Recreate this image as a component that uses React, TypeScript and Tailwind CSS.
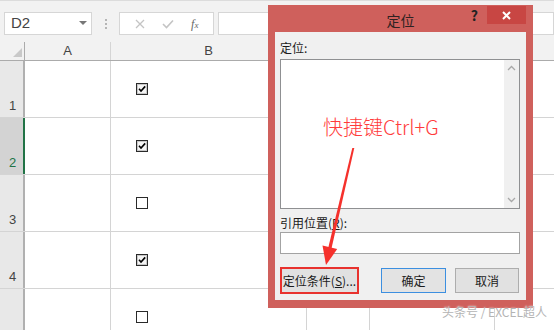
import { ReactNode } from "react";

const rows = [
    { n: "1", checked: true },
    { n: "2", checked: true, active: true },
    { n: "3", checked: false },
    { n: "4", checked: true },
    { n: "", checked: false },
];

function CheckBox({ checked }: { checked: boolean }) {
    return (
        <svg width="12" height="12" viewBox="0 0 12 12" className="block">
            <rect x="0.5" y="0.5" width="11" height="11" fill={checked ? "#f4f4f4" : "#fff"} stroke="#2a2a2a" />
            {checked && <rect x="1.5" y="1.5" width="9" height="9" fill="none" stroke="#c8c8c8" />}
            {checked && <path d="M3 5.8 L5 8 L9.2 3.4" fill="none" stroke="#000" strokeWidth="1.6" />}
        </svg>
    );
}

function Button({ children, className }: { children: ReactNode; className: string }) {
    return (
        <div className={`h-[25px] flex items-center justify-center text-[12px] text-[#1b1b1b] ${className}`}>
            {children}
        </div>
    );
}

export default function App() {
    const font = "font-['Liberation_Sans','Noto_Sans_CJK_SC',sans-serif]";
    const cjk = "font-['Noto_Sans_CJK_SC','Liberation_Sans',sans-serif]";

    return (
        <div className={`relative w-[554px] h-[330px] overflow-hidden bg-white ${font}`}>
            {/* toolbar */}
            <div className="h-[42px] bg-[#f2f2f2] border-t border-[#dcdcdc] flex items-start pt-[11px]">
                <div className="ml-[4px] w-[88px] h-[23px] bg-white border border-[#d6d6d6] flex items-center justify-between pl-[6px] pr-[4px]">
                    <span className="text-[15px] text-[#444]">D2</span>
                    <svg width="8" height="5" viewBox="0 0 8 5"><path d="M0 0 H8 L4 4 Z" fill="#777" /></svg>
                </div>
                <div className="w-[27px] h-[23px] flex flex-col items-center justify-center gap-[2px]">
                    <span className="w-[2px] h-[2px] bg-[#b5b5b5]" />
                    <span className="w-[2px] h-[2px] bg-[#b5b5b5]" />
                    <span className="w-[2px] h-[2px] bg-[#b5b5b5]" />
                </div>
                <div className="w-[95px] h-[23px] bg-white border border-[#d6d6d6] flex items-center justify-around px-[6px]">
                    <svg width="10" height="10" viewBox="0 0 10 10"><path d="M1 1 L9 9 M9 1 L1 9" stroke="#c4c4c4" strokeWidth="1.3" /></svg>
                    <svg width="12" height="10" viewBox="0 0 12 10"><path d="M1 5 L4.5 8.5 L11 1.5" fill="none" stroke="#c4c4c4" strokeWidth="1.6" /></svg>
                    <span className="text-[12px] italic text-[#666] font-['Liberation_Serif',serif]">f<span className="text-[9px]">x</span></span>
                </div>
                <div className="ml-[4px] flex-1 h-[23px] bg-white border border-[#d6d6d6]" />
            </div>

            {/* column headers */}
            <div className="h-[19px] flex bg-[#f2f2f2] border-b border-[#ababab] text-[13px] text-[#444]">
                <div className="w-[25px] border-r border-[#ababab] flex items-end justify-end pr-[2px] pb-[3px]">
                    <svg width="9" height="9" viewBox="0 0 9 9"><path d="M9 0 V9 H0 Z" fill="#c9c9c9" /></svg>
                </div>
                <div className="w-[86px] border-r border-[#d5d5d5] flex items-center justify-center">A</div>
                <div className="w-[196px] border-r border-[#d5d5d5] flex items-center justify-center">B</div>
                <div className="w-[63px] border-r border-[#d5d5d5]" />
                <div className="w-[125px] border-r border-[#d5d5d5]" />
                <div className="flex-1" />
            </div>

            {/* grid rows */}
            {rows.map((r, i) => (
                <div key={i} className="h-[57px] flex border-b border-[#d4d4d4]">
                    <div
                        className={`w-[25px] border-r-2 flex items-end pl-[9px] pb-[2px] text-[13px] ${
                            r.active ? "bg-[#d3d3d3] border-[#217346] text-[#217346]" : "bg-[#e8e8e8] border-[#b0b0b0] text-[#444]"
                        }`}
                    >
                        {r.n}
                    </div>
                    <div className="w-[86px] border-r border-[#d4d4d4]" />
                    <div className="w-[196px] border-r border-[#d4d4d4] pl-[25px] pt-[22px]">
                        <CheckBox checked={r.checked} />
                    </div>
                    <div className="w-[63px] border-r border-[#d4d4d4]" />
                    <div className="w-[125px] border-r border-[#d4d4d4]" />
                    <div className="flex-1" />
                </div>
            ))}

            {/* 定位 dialog */}
            <div className={`absolute left-[268px] top-[5px] w-[265px] h-[303px] bg-[#cf605c] flex flex-col ${cjk}`}>
                <div className="h-[27px] grid grid-cols-[1fr_auto_1fr] items-start">
                    <div />
                    <div className="pt-[5px] text-[14px] text-[#2e2222]">定位</div>
                    <div className="flex justify-end items-start pr-[7px] pt-[1px]">
                        <span className="mr-[9px] text-[14px] font-bold text-[#222] leading-[18px]">?</span>
                        <div className="w-[39px] h-[18px] bg-[#c84643] flex items-center justify-center">
                            <svg width="9" height="9" viewBox="0 0 9 9"><path d="M1 1 L8 8 M8 1 L1 8" stroke="#fff" strokeWidth="2" /></svg>
                        </div>
                    </div>
                </div>

                <div className="mx-[7px] h-[268px] bg-[#f0f0f0] pl-[5px] pr-[6px] flex flex-col">
                    <div className="h-[27px] pt-[8px] text-[12px] leading-[16px] text-[#1b1b1b]">定位:</div>
                    <div className="h-[150px] bg-white border border-[#8f9092] flex justify-end">
                        <div className="w-[15px] bg-[#f0f0f0] flex flex-col justify-between items-center py-[5px]">
                            <svg width="9" height="6" viewBox="0 0 9 6"><path d="M1 5 L4.5 1.5 L8 5" fill="none" stroke="#a8a8a8" strokeWidth="1.3" /></svg>
                            <svg width="9" height="6" viewBox="0 0 9 6"><path d="M1 1 L4.5 4.5 L8 1" fill="none" stroke="#a8a8a8" strokeWidth="1.3" /></svg>
                        </div>
                    </div>
                    <div className="mt-[5px] h-[18px] text-[12px] leading-[18px] text-[#1b1b1b]">
                        引用位置(<span className="underline">R</span>):
                    </div>
                    <div className="h-[22px] bg-white border border-[#a3a3a3]" />
                    <div className="mt-[14px] flex">
                        <div className="w-[79px] h-[27px] -mt-[1px] border-2 border-[#e8322e] flex items-center justify-center bg-[#e1e1e1]">
                            <span className="text-[12px] text-[#1b1b1b]">
                                定位条件(<span className="underline">S</span>)...
                            </span>
                        </div>
                        <Button className="ml-[22px] w-[65px] bg-[#e3e3e3] border border-[#3c8fe0]">确定</Button>
                        <Button className="ml-[9px] w-[64px] bg-[#e1e1e1] border border-[#adadad]">取消</Button>
                    </div>
                </div>
            </div>

            {/* annotation */}
            <div className={`absolute left-[323px] top-[114px] text-[20px] leading-[26px] font-light text-[#ff3b3b] ${cjk}`}>
                快捷键Ctrl+G
            </div>
            <svg className="absolute left-0 top-0" width="554" height="330" viewBox="0 0 554 330">
                <polygon points="352.3,148 354.3,148 331.6,248 328.2,248" fill="#f5312c" />
                <polygon points="322.5,245.5 337.2,249 326,265" fill="#f5312c" />
            </svg>

            {/* watermark */}
            <div className={`absolute left-[442px] top-[304px] whitespace-nowrap text-[12px] leading-[16px] text-[#b4b4b4] ${cjk} [text-shadow:0_0_2px_#fff]`}>
                头条号 / EXCEL超人
            </div>
        </div>
    );
}
